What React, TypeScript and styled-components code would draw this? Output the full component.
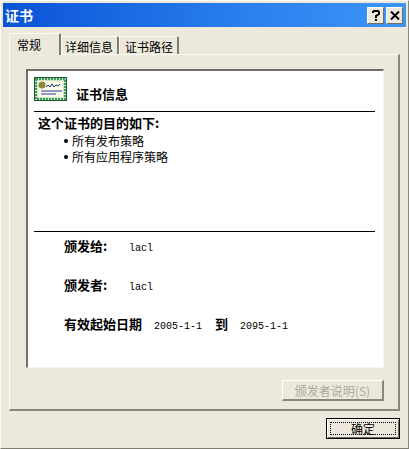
import React from "react";
import styled, { createGlobalStyle } from "styled-components";

const Global = createGlobalStyle`
  html, body { margin: 0; padding: 0; background: #ece9d8; }
  * { box-sizing: border-box; }
`;

const Win = styled.div`
  width: 409px;
  height: 449px;
  background: #ece9dc;
  border-top: 1px solid #fbfaf3;
  border-left: 1px solid #fbfaf3;
  border-right: 1px solid #8a8778;
  border-bottom: 1px solid #7f7c70;
  padding: 2px;
  display: flex;
  flex-direction: column;
  font-family: "Noto Sans CJK SC", "Liberation Sans", sans-serif;
  font-size: 12px;
  color: #000;
`;

const TitleBar = styled.div`
  height: 24px;
  flex: none;
  background: linear-gradient(90deg, #0a53d6 0%, #2a80ee 60%, #3d95f8 100%);
  display: flex;
  align-items: center;
  justify-content: space-between;
  padding: 0 3px 0 2px;
`;

const Title = styled.span`
  color: #fff;
  font-weight: 700;
  font-size: 14px;
  line-height: 24px;
`;

const TitleButtons = styled.div`
  display: flex;
  gap: 2px;
`;

const CapBtn = styled.div`
  width: 17px;
  height: 17px;
  background: #ece9dc;
  border-top: 1px solid #fff;
  border-left: 1px solid #fff;
  border-right: 1px solid #716f64;
  border-bottom: 1px solid #716f64;
  display: flex;
  align-items: center;
  justify-content: center;
`;

const Content = styled.div`
  flex: 1;
  display: flex;
  flex-direction: column;
  padding: 6px 6px 0 6px;
`;

const Tabs = styled.div`
  display: flex;
  align-items: flex-end;
  height: 21px;
  flex: none;
  position: relative;
  z-index: 1;
`;

const Tab = styled.div<{ $active?: boolean; $w: number; $pad: number }>`
  width: ${(p) => p.$w}px;
  height: ${(p) => (p.$active ? 22 : 18)}px;
  margin-bottom: ${(p) => (p.$active ? -1 : 0)}px;
  background: #ece9dc;
  border-top: 1px solid #fbfaf3;
  border-left: 1px solid #fbfaf3;
  border-right: 2px solid #7f7c70;
  border-top-right-radius: 2px;
  padding-left: ${(p) => p.$pad}px;
  line-height: ${(p) => (p.$active ? 21 : 19)}px;
  white-space: nowrap;
`;

const Panel = styled.div`
  width: 391px;
  height: 357px;
  flex: none;
  border-top: 1px solid #fbfaf3;
  border-left: 1px solid #fbfaf3;
  border-right: 2px solid #8a8778;
  border-bottom: 2px solid #8a8778;
  padding: 14px 14px 0 16px;
  display: flex;
  flex-direction: column;
`;

const Cert = styled.div`
  width: 358px;
  height: 299px;
  flex: none;
  background: #fff;
  border-top: 2px solid #716f64;
  border-left: 2px solid #716f64;
  border-right: 1px solid #f7f6ee;
  border-bottom: 1px solid #f7f6ee;
  padding: 0 8px 0 6px;
  display: flex;
  flex-direction: column;
`;

const Header = styled.div`
  height: 41px;
  flex: none;
  display: flex;
  align-items: flex-start;
  gap: 9px;
  padding-top: 6px;
  border-bottom: 1px solid #000;
`;

const HeadText = styled.span`
  font-weight: 700;
  font-size: 13px;
  line-height: 17px;
  margin-top: 8px;
`;

const Purpose = styled.div`
  height: 120px;
  flex: none;
  padding: 2px 0 0 4px;
  border-bottom: 1px solid #000;
`;

const PurposeTitle = styled.div`
  font-weight: 700;
  font-size: 13px;
  line-height: 17px;
`;

const Bullets = styled.ul`
  list-style: none;
  margin: 2px 0 0 0;
  padding: 0 0 0 26px;
`;

const Bullet = styled.li`
  line-height: 16px;
  display: flex;
  align-items: center;
  gap: 4px;
  &::before {
    content: "";
    width: 4px;
    height: 4px;
    border-radius: 50%;
    background: #000;
  }
`;

const Info = styled.div`
  display: flex;
  flex-direction: column;
  padding: 5px 0 0 30px;
`;

const InfoRow = styled.div<{ $h: number }>`
  height: ${(p) => p.$h}px;
  display: flex;
  align-items: baseline;
  line-height: 17px;
`;

const Label = styled.span`
  font-weight: 700;
  font-size: 13px;
  width: 65px;
  flex: none;
`;

const Mono = styled.span`
  font-family: "Liberation Mono", monospace;
  font-size: 10px;
  line-height: 17px;
  white-space: nowrap;
`;

const DateLabel = styled.span`
  font-weight: 700;
  font-size: 13px;
  margin: 0 12px 0 13px;
`;

const StartLabel = styled.span`
  font-weight: 700;
  font-size: 13px;
  margin-right: 12px;
`;

const PanelFoot = styled.div`
  display: flex;
  justify-content: flex-end;
  padding-top: 12px;
`;

const Btn = styled.div<{ $w: number; $default?: boolean; $disabled?: boolean }>`
  width: ${(p) => p.$w}px;
  height: 21px;
  background: #ece9dc;
  display: flex;
  align-items: center;
  justify-content: center;
  white-space: nowrap;
  position: relative;
  color: ${(p) => (p.$disabled ? "#aca899" : "#000")};
  ${(p) =>
    p.$default
      ? `border: 1px solid #000; box-shadow: inset 1px 1px 0 #fff, inset -1px -1px 0 #716f64;`
      : `border-top: 1px solid #fff; border-left: 1px solid #fff; border-right: 2px solid #8a8778; border-bottom: 2px solid #8a8778;`}
`;

const Focus = styled.span`
  position: absolute;
  inset: 3px;
  border: 1px dotted #000;
`;

const Foot = styled.div`
  display: flex;
  justify-content: flex-end;
  padding-top: 7px;
`;

const CertIcon = () => (
  <svg width="33" height="24" viewBox="0 0 33 24" style={{ flex: "none" }}>
    <rect x="0.5" y="0.5" width="32" height="23" fill="#cfe6c8" stroke="#1d5a30" />
    <rect x="2" y="2" width="29" height="20" fill="none" stroke="#3f9a58" strokeWidth="2" strokeDasharray="2 1" />
    <rect x="4" y="4" width="25" height="16" fill="#fbfbe8" />
    <circle cx="8" cy="8" r="3.5" fill="#8a8a3c" />
    <path d="M12 10l2-2 2 2 2-3 2 3 2-2 2 1 2-2" fill="none" stroke="#16306e" />
    <path d="M7 14h21" stroke="#2438a8" />
    <path d="M7 17h15" stroke="#2438a8" />
  </svg>
);

export default function App() {
  return (
    <>
      <Global />
      <Win>
        <TitleBar>
          <Title>证书</Title>
          <TitleButtons>
            <CapBtn>
              <svg width="10" height="11" viewBox="0 0 10 11">
                <path d="M2 3V2l1-1h4l1 1v2L5 6v2" fill="none" stroke="#000" strokeWidth="2" />
                <rect x="4" y="9" width="2" height="2" />
              </svg>
            </CapBtn>
            <CapBtn>
              <svg width="10" height="9" viewBox="0 0 10 9">
                <path d="M1 0.5 9 8.5M9 0.5 1 8.5" stroke="#000" strokeWidth="2" />
              </svg>
            </CapBtn>
          </TitleButtons>
        </TitleBar>
        <Content>
          <Tabs>
            <Tab $active $w={52} $pad={7}>常规</Tab>
            <Tab $w={58} $pad={3}>详细信息</Tab>
            <Tab $w={60} $pad={5}>证书路径</Tab>
          </Tabs>
          <Panel>
            <Cert>
              <Header>
                <CertIcon />
                <HeadText>证书信息</HeadText>
              </Header>
              <Purpose>
                <PurposeTitle>这个证书的目的如下:</PurposeTitle>
                <Bullets>
                  <Bullet>所有发布策略</Bullet>
                  <Bullet>所有应用程序策略</Bullet>
                </Bullets>
              </Purpose>
              <Info>
                <InfoRow $h={39}>
                  <Label>颁发给:</Label>
                  <Mono>lacl</Mono>
                </InfoRow>
                <InfoRow $h={39}>
                  <Label>颁发者:</Label>
                  <Mono>lacl</Mono>
                </InfoRow>
                <InfoRow $h={20}>
                  <StartLabel>有效起始日期</StartLabel>
                  <Mono>2005-1-1</Mono>
                  <DateLabel>到</DateLabel>
                  <Mono>2095-1-1</Mono>
                </InfoRow>
              </Info>
            </Cert>
            <PanelFoot>
              <Btn $w={102} $disabled>颁发者说明(S)</Btn>
            </PanelFoot>
          </Panel>
          <Foot>
            <Btn $w={74} $default>
              <Focus />
              确定
            </Btn>
          </Foot>
        </Content>
      </Win>
    </>
  );
}
